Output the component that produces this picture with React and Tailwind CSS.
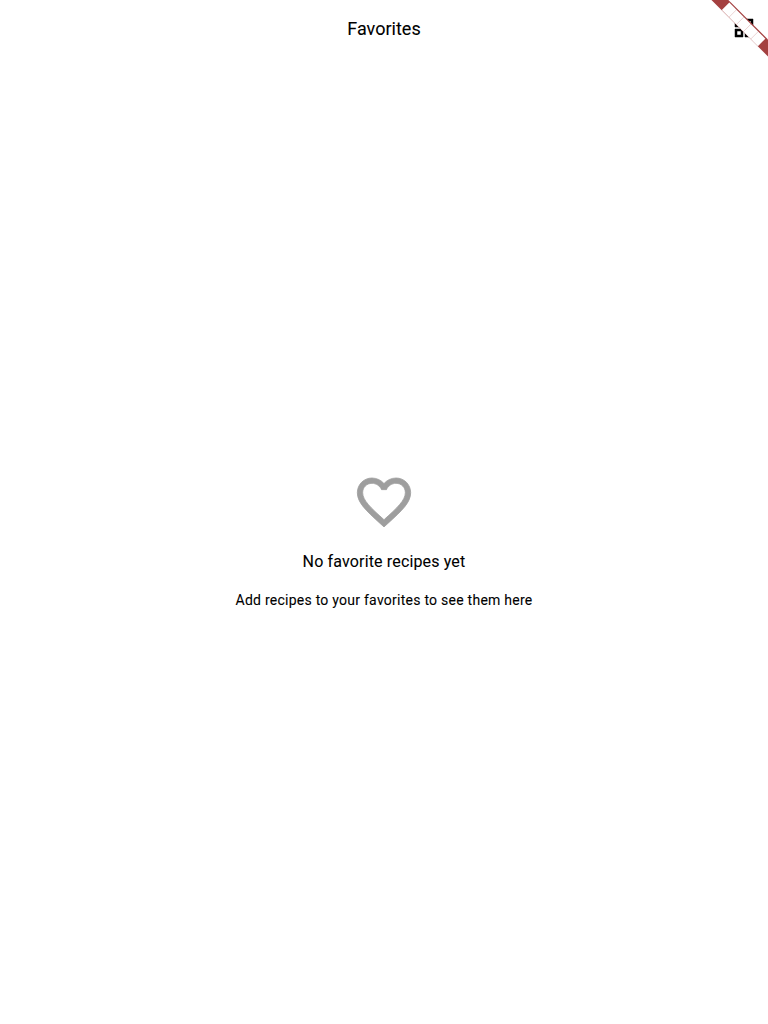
function GridIcon() {
  return (
    <svg viewBox="0 0 24 24" className="size-6" fill="#000" stroke="#000" strokeWidth="0.5">
      <path d="M3 3v8h8V3H3zm6 6H5V5h4v4zm-6 4v8h8v-8H3zm6 6H5v-4h4v4zm4-16v8h8V3h-8zm6 6h-4V5h4v4zm-6 4v8h8v-8h-8zm6 6h-4v-4h4v4z" />
    </svg>
  );
}

function HeartIcon() {
  return (
    <svg viewBox="0 0 24 24" className="size-16" fill="#9e9e9e" stroke="#9e9e9e" strokeWidth="0.3">
      <path d="M16.5 3c-1.74 0-3.41.81-4.5 2.09C10.91 3.81 9.24 3 7.5 3 4.42 3 2 5.42 2 8.5c0 3.78 3.4 6.86 8.55 11.54L12 21.35l1.45-1.32C18.6 15.36 22 12.28 22 8.5 22 5.42 19.58 3 16.5 3zm-4.4 15.55l-.1.1-.1-.1C7.14 14.24 4 11.39 4 8.5 4 6.5 5.5 5 7.5 5c1.54 0 3.04.99 3.57 2.36h1.87C13.46 5.99 14.96 5 16.5 5c2 0 3.5 1.5 3.5 3.5 0 2.89-3.14 5.74-7.9 10.05z" />
    </svg>
  );
}

function CornerRibbon() {
  return (
    <svg className="absolute top-0 right-0 size-16" viewBox="0 0 64 64">
      <g transform="translate(64 0) rotate(45)">
        <rect x="-40" y="28" width="80" height="12" fill="#a44040" />
        {[0, 1, 2, 3, 4].map((i) => (
          <rect key={i} x={-25.5 + i * 10.2} y="29.2" width="10.2" height="10.6" fill="#fff" />
        ))}
      </g>
    </svg>
  );
}

export default function App() {
  return (
    <div className="relative flex h-screen flex-col overflow-hidden bg-white font-['Roboto',sans-serif] text-black">
      <header className="grid h-14 shrink-0 grid-cols-[1fr_auto_1fr] items-center px-3">
        <span />
        <h1 className="pt-0.5 text-[18px] leading-6 [-webkit-text-stroke:0.08px_#000]">Favorites</h1>
        <button className="justify-self-end" aria-label="Grid view">
          <GridIcon />
        </button>
      </header>
      <main className="flex flex-1 flex-col items-center justify-center gap-4">
        <HeartIcon />
        <p className="text-base leading-6 tracking-[0.15px] [-webkit-text-stroke:0.08px_#000]">No favorite recipes yet</p>
        <p className="text-sm leading-5 tracking-[0.25px] [-webkit-text-stroke:0.08px_#000]">Add recipes to your favorites to see them here</p>
      </main>
      <CornerRibbon />
    </div>
  );
}
